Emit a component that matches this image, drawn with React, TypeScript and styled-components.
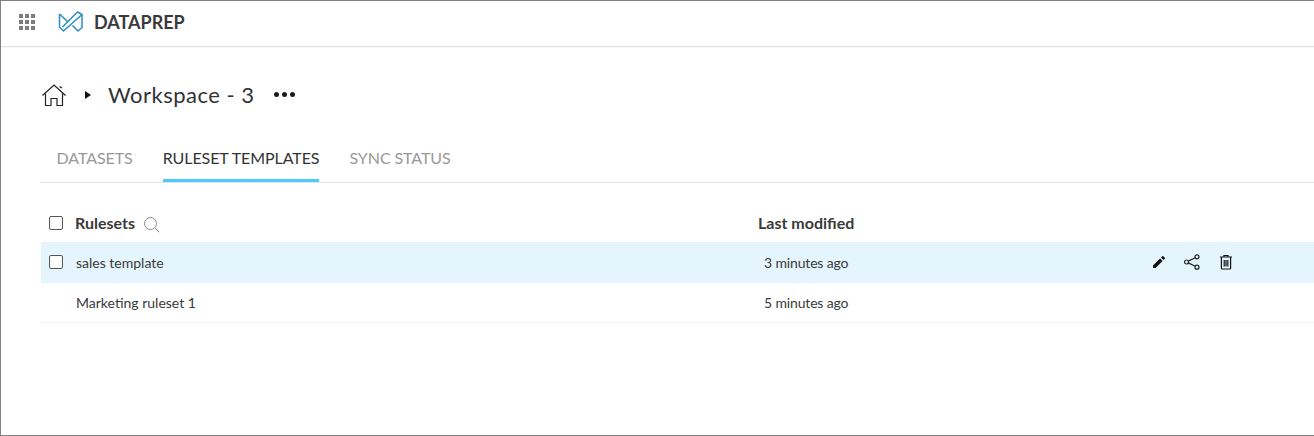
import React from "react";
import styled, { createGlobalStyle } from "styled-components";

const GlobalStyle = createGlobalStyle`
  html, body {
    margin: 0;
    padding: 0;
    background: #fff;
    font-family: Lato, "Open Sans", sans-serif;
    color: #333;
  }
`;

const Frame = styled.div`
  box-sizing: border-box;
  width: 1314px;
  height: 436px;
  border: 1px solid #808080;
  border-right: 0;
  overflow: hidden;
`;

const TopBar = styled.header`
  box-sizing: border-box;
  height: 46px;
  display: flex;
  align-items: center;
  padding: 0 0 4px 18px;
  border-bottom: 1px solid #dfe3e5;
  box-shadow: 0 1px 1px rgba(0, 0, 0, 0.03);
`;

const AppGrid = styled.div`
  display: grid;
  grid-template-columns: repeat(3, 4px);
  grid-auto-rows: 4px;
  gap: 2px;
  margin-right: 23px;
`;

const AppDot = styled.span`
  background: #7d7d7d;
`;

const Brand = styled.span`
  margin-left: 11px;
  font-size: 18px;
  font-weight: 700;
  color: #3a3a3c;
`;

const Content = styled.main`
  padding: 0 0 0 40px;
`;

const Breadcrumb = styled.div`
  height: 95px;
  display: flex;
  align-items: center;
`;

const Caret = styled.span`
  width: 0;
  height: 0;
  margin: 0 17px 0 18px;
  border-left: 6px solid #111;
  border-top: 4px solid transparent;
  border-bottom: 4px solid transparent;
`;

const Title = styled.h1`
  margin: 0;
  font-size: 22px;
  font-weight: 400;
  letter-spacing: 0.5px;
  color: #333;
`;

const More = styled.div`
  display: flex;
  gap: 3px;
  margin-left: 19px;
`;

const MoreDot = styled.span`
  width: 5px;
  height: 5px;
  border-radius: 50%;
  background: #1c1c1c;
`;

const Tabs = styled.nav`
  height: 40px;
  display: flex;
  gap: 30px;
  padding-left: 15.6px;
  border-bottom: 1px solid #dfe3e5;
`;

const Tab = styled.div<{ $active?: boolean }>`
  box-sizing: border-box;
  height: 40px;
  padding-top: 6px;
  font-size: 16px;
  line-height: 20px;
  letter-spacing: -0.08px;
  color: ${(p) => (p.$active ? "#333" : "#999")};
  border-bottom: 3px solid ${(p) => (p.$active ? "#4ccbf8" : "transparent")};
`;

const HeaderRow = styled.div`
  height: 59px;
  box-sizing: border-box;
  padding-top: 30px;
  display: flex;
  align-items: flex-start;
`;

const Row = styled.div<{ $selected?: boolean }>`
  box-sizing: border-box;
  height: ${(p) => (p.$selected ? "41px" : "40px")};
  display: flex;
  align-items: center;
  background: ${(p) => (p.$selected ? "#e4f5fd" : "#fff")};
  border-bottom: 1px solid ${(p) => (p.$selected ? "#e4f5fd" : "#f1f3f4")};
  font-size: 14px;
  color: #3a3a3a;
`;

const Check = styled.span`
  flex: none;
  box-sizing: border-box;
  width: 14px;
  height: 14px;
  margin-left: 8px;
  border: 1.3px solid #555;
  border-radius: 2px;
  background: #fff;
`;

const HeaderCheck = styled(Check)`
  margin-top: 3px;
`;

const NameHead = styled.div`
  width: 683px;
  margin-left: 12px;
  display: flex;
  align-items: center;
  font-size: 16px;
  line-height: 20px;
  font-weight: 700;
  color: #3a3a3a;
`;

const ModifiedHead = styled.div`
  font-size: 16px;
  line-height: 20px;
  font-weight: 700;
  color: #3a3a3a;
`;

const NameCell = styled.div<{ $indent?: boolean }>`
  width: 688px;
  margin-left: ${(p) => (p.$indent ? "35px" : "13px")};
`;

const TimeCell = styled.div`
  width: 388px;
  letter-spacing: -0.15px;
`;

const Actions = styled.div`
  display: flex;
  align-items: center;
  gap: 16px;
`;

const SearchSvg = styled.svg`
  margin: 3px 0 0 8px;
`;

const SearchIcon = () => (
  <SearchSvg width="17" height="17" viewBox="0 0 17 17" fill="none" stroke="#8c8c8c" strokeWidth="1">
    <circle cx="7.5" cy="7.5" r="6" />
    <path d="M12 12l4 4" strokeLinecap="round" />
  </SearchSvg>
);

const HomeIcon = () => (
  <svg width="26" height="24" viewBox="0 0 26 24" fill="none" stroke="#222" strokeWidth="1.2">
    <path d="M1.5 12.5L13 2l11.5 10.5" />
    <path d="M18.5 3.5l2.5 1.5" />
    <path d="M4.5 10.5V22.5h5.5v-7h6v7h5.5V10.5" />
  </svg>
);

const Logo = () => (
  <svg width="25" height="21" viewBox="0 0 25 21" fill="none" stroke="#2a8cc4" strokeWidth="1.5" strokeLinejoin="round">
    <path d="M1.5 3V16L5.5 20L24 3.5L19.5 1L4.5 16" />
    <path d="M1.5 3L10 11" />
    <path d="M24 3.5V16.5L20 20L14.5 14.5" />
  </svg>
);

const PencilIcon = () => (
  <svg width="14" height="14" viewBox="0 0 14 14" fill="#111">
    <path d="M1 10.5V13h2.5L10.6 5.9 8.1 3.4 1 10.5z" />
    <path d="M12.8 3.7c.3-.3.3-.7 0-1L11.3 1.2c-.3-.3-.7-.3-1 0L9 2.5l2.5 2.5 1.3-1.3z" />
  </svg>
);

const ShareIcon = () => (
  <svg width="21" height="18" viewBox="-1 0 21 18" fill="none" stroke="#222" strokeWidth="1.2">
    <circle cx="14" cy="3.8" r="2" />
    <circle cx="3.5" cy="9" r="2" />
    <circle cx="14" cy="14.2" r="2" />
    <path d="M5.3 8.1l6.9-3.4M5.3 9.9l6.9 3.4" />
  </svg>
);

const TrashIcon = () => (
  <svg width="14" height="16" viewBox="0 0 14 16" fill="none" stroke="#111" strokeWidth="1.2">
    <path d="M1 3h12M5 3V1.5h4V3" />
    <path d="M2.4 3v11.2c0 .5.3.8.8.8h7.6c.5 0 .8-.3.8-.8V3" />
    <path d="M5.2 6v6.5M7 6v6.5M8.8 6v6.5" />
  </svg>
);

export default function App() {
  return (
    <Frame>
      <GlobalStyle />
      <TopBar>
        <AppGrid>
          {Array.from({ length: 9 }).map((_, i) => (
            <AppDot key={i} />
          ))}
        </AppGrid>
        <Logo />
        <Brand>DATAPREP</Brand>
      </TopBar>
      <Content>
        <Breadcrumb>
          <HomeIcon />
          <Caret />
          <Title>Workspace - 3</Title>
          <More>
            <MoreDot />
            <MoreDot />
            <MoreDot />
          </More>
        </Breadcrumb>
        <Tabs>
          <Tab>DATASETS</Tab>
          <Tab $active>RULESET TEMPLATES</Tab>
          <Tab>SYNC STATUS</Tab>
        </Tabs>
        <HeaderRow>
          <HeaderCheck />
          <NameHead>
            Rulesets
            <SearchIcon />
          </NameHead>
          <ModifiedHead>Last modified</ModifiedHead>
        </HeaderRow>
        <Row $selected>
          <Check />
          <NameCell>sales template</NameCell>
          <TimeCell>3 minutes ago</TimeCell>
          <Actions>
            <PencilIcon />
            <ShareIcon />
            <TrashIcon />
          </Actions>
        </Row>
        <Row>
          <NameCell $indent>Marketing ruleset 1</NameCell>
          <TimeCell>5 minutes ago</TimeCell>
        </Row>
      </Content>
    </Frame>
  );
}
